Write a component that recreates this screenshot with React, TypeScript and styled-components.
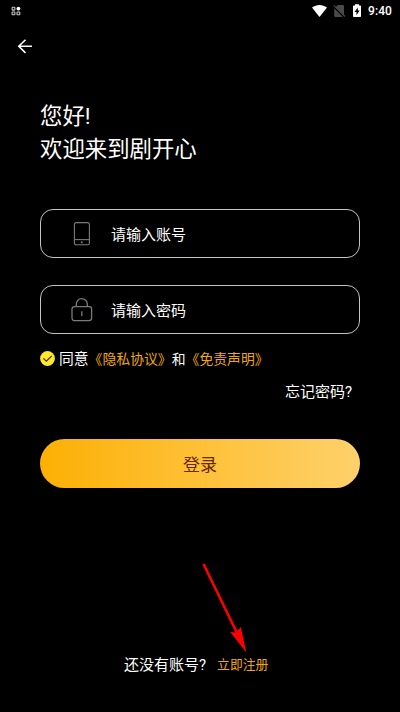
import React from "react";
import styled, { createGlobalStyle } from "styled-components";

const GlobalStyle = createGlobalStyle`
  * { box-sizing: border-box; }
  body {
    margin: 0;
    background: #000;
    color: #fff;
    font-family: Roboto, "Noto Sans CJK SC", sans-serif;
  }
  button, input { font: inherit; color: inherit; background: none; border: 0; padding: 0; margin: 0; }
  svg { display: block; flex: none; }
`;

const Screen = styled.div`
  position: relative;
  display: flex;
  flex-direction: column;
  width: 400px;
  height: 712px;
  overflow: hidden;
  background: #000;
`;

const StatusBar = styled.header`
  display: flex;
  align-items: center;
  justify-content: space-between;
  height: 22px;
  padding: 0 8px 0 11px;
`;

const StatusIcons = styled.div`
  display: flex;
  align-items: center;
`;

const Clock = styled.span`
  margin-left: 6px;
  font-size: 12px;
  font-weight: 500;
  line-height: 22px;
  letter-spacing: 0.1px;
`;

const NavBar = styled.nav`
  display: flex;
  align-items: center;
  height: 48px;
  padding-left: 17px;
`;

const Main = styled.main`
  display: flex;
  flex-direction: column;
  flex: 1;
  padding: 30px 40px 0;
`;

const Greeting = styled.h1`
  margin: 0 0 43px;
  font-size: 22.4px;
  font-weight: 400;
  line-height: 33px;
`;

const Field = styled.label`
  display: flex;
  align-items: center;
  height: 49px;
  margin-bottom: 27px;
  padding-left: 30px;
  border: 1px solid #c4c4c4;
  border-radius: 13px;
`;

const FieldIcon = styled.span`
  width: 40px;
`;

const FieldInput = styled.input`
  width: 220px;
  height: 32px;
  padding-top: 2px;
  font-size: 15px;
  outline: none;
  &::placeholder { color: #fff; opacity: 1; }
`;

const Agreement = styled.div`
  display: flex;
  align-items: center;
  height: 20px;
  margin-top: -13px;
  font-size: 13.85px;
  line-height: 20px;
  white-space: nowrap;
  > span { padding-top: 2px; }
`;

const AgreeText = styled.span`
  margin-left: 4px;
  font-size: 14.8px;
`;

const Link = styled.span`
  color: #f0a80f;
`;

const Forgot = styled.button`
  align-self: flex-end;
  height: 22px;
  margin: 13px 8px 0 0;
  font-size: 15px;
  line-height: 22px;
`;

const LoginButton = styled.button`
  height: 49px;
  margin-top: 36px;
  padding-top: 3px;
  border-radius: 25px;
  background: linear-gradient(90deg, #fcb004, #ffd16b);
  color: #642805;
  font-size: 17px;
  line-height: 46px;
`;

const Footer = styled.footer`
  display: flex;
  align-items: center;
  height: 24px;
  margin: 0 0 37px 124px;
  font-size: 15px;
  white-space: nowrap;
`;

const Register = styled(Link)`
  margin-left: 11px;
  font-size: 12.8px;
`;

const Pointer = styled.svg`
  position: absolute;
  left: 200px;
  top: 560px;
`;

const AppsIcon = () => (
  <svg width="10" height="10" viewBox="0 0 10 10" fill="none" stroke="#c8c8c8" strokeWidth="1.1">
    <rect x="1.1" y="1.3" width="2.8" height="2.8" rx=".5" />
    <circle cx="7.4" cy="2.6" r="1.9" fill="#fff" stroke="none" />
    <rect x="1.1" y="6" width="2.8" height="2.8" rx=".5" />
    <rect x="6" y="6" width="2.8" height="2.8" rx=".5" />
  </svg>
);

const DeviceStatusIcons = () => (
  <svg width="50" height="16" viewBox="313 3 50 16">
    <path d="M313 7.5C317.5 4 323.5 4 328 7.5L320.5 17Z" fill="#fff" />
    <path d="M336.5 7.3L345 15.8V6.2Q345 5 343.8 5H338.8ZM335.2 8.2V15.8Q335.2 17 336.4 17H344Z" fill="#4a4a4a" />
    <path d="M334.8 5.3L346 16.5" stroke="#4a4a4a" strokeWidth="1.1" />
    <path d="M356 4.2H360V5.4H361.2Q362 5.4 362 6.2V16.2Q362 17 361.2 17H354.8Q354 17 354 16.2V6.2Q354 5.4 354.8 5.4H356Z" fill="#fff" />
    <path d="M358.8 7.4L355.5 12H357.5V15.3L360.6 10.6H358.8Z" fill="#000" />
  </svg>
);

const BackIcon = () => (
  <svg width="16" height="16" viewBox="0 0 16 16" fill="none" stroke="#fff" strokeWidth="1.6">
    <path d="M15 8.3H2M8.5 1.7L1.8 8.3L8.5 14.9" />
  </svg>
);

const PhoneIcon = () => (
  <svg width="22" height="26" viewBox="0 0 22 26" fill="none" stroke="#7b7b7b" strokeWidth="1.1">
    <rect x="3.4" y="1.6" width="15" height="22.2" rx="1.8" />
    <path d="M3.4 18.6H18.4" />
    <circle cx="10.8" cy="21.2" r="1" fill="#7b7b7b" stroke="none" />
  </svg>
);

const LockIcon = () => (
  <svg width="22" height="26" viewBox="0 0 22 26" fill="none" stroke="#7b7b7b" strokeWidth="1.3">
    <rect x="1" y="9.7" width="19.6" height="14" rx="2.6" />
    <path d="M5.3 9.7V7A5.5 5.3 0 0 1 16.3 7V9.7M10.8 14.3V19.1" />
  </svg>
);

const CheckIcon = () => (
  <svg width="15" height="15" viewBox="0 0 15 15">
    <circle cx="7.5" cy="7.5" r="7.4" fill="#ffe72b" />
    <path d="M3.4 7.4L6.3 10.2L11.8 4.9" fill="none" stroke="#302b10" strokeWidth="1.2" />
  </svg>
);

export default function App() {
  return (
    <Screen>
      <GlobalStyle />
      <StatusBar>
        <AppsIcon />
        <StatusIcons>
          <DeviceStatusIcons />
          <Clock>9:40</Clock>
        </StatusIcons>
      </StatusBar>
      <NavBar>
        <BackIcon />
      </NavBar>
      <Main>
        <Greeting>
          您好!
          <br />
          欢迎来到剧开心
        </Greeting>
        <Field>
          <FieldIcon><PhoneIcon /></FieldIcon>
          <FieldInput placeholder="请输入账号" />
        </Field>
        <Field>
          <FieldIcon><LockIcon /></FieldIcon>
          <FieldInput type="password" placeholder="请输入密码" />
        </Field>
        <Agreement>
          <CheckIcon />
          <AgreeText>同意</AgreeText>
          <Link>《隐私协议》</Link>
          <span>和</span>
          <Link>《免责声明》</Link>
        </Agreement>
        <Forgot>忘记密码?</Forgot>
        <LoginButton>登录</LoginButton>
      </Main>
      <Footer>
        <span>还没有账号?</span>
        <Register>立即注册</Register>
      </Footer>
      <Pointer width="52" height="96" viewBox="200 560 52 96">
        <path d="M203.5 564L237 633" stroke="#f00" strokeWidth="2.6" />
        <path d="M246.3 652.5L230.3 632L236 632.5L240.8 627Z" fill="#f00" />
      </Pointer>
    </Screen>
  );
}
